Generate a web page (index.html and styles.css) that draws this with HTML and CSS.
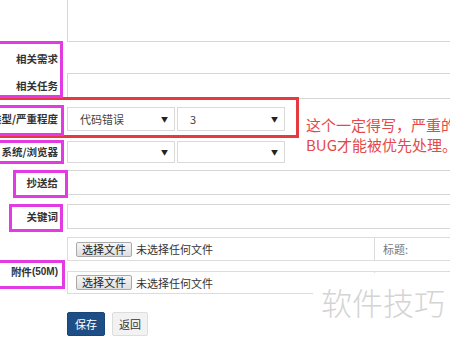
FILE: index.html
```html
<!DOCTYPE html>
<html lang="zh-CN">
<head>
<meta charset="UTF-8">
<title>提Bug</title>
<link rel="stylesheet" href="styles.css">
</head>
<body>

<div class="bug-form">
  <div class="row row-desc">
    <div class="label"></div>
    <div class="field"><textarea class="textarea"></textarea></div>
  </div>

  <div class="row row-story">
    <div class="label">相关需求</div>
    <div class="field"></div>
  </div>

  <div class="row row-task">
    <div class="label">相关任务</div>
    <div class="field"><input type="text" class="input"></div>
  </div>

  <div class="row row-type">
    <div class="label">类型/严重程度</div>
    <div class="field">
      <div class="select">代码错误<span class="caret">▼</span></div>
      <div class="select">3<span class="caret">▼</span></div>
    </div>
  </div>

  <div class="row row-os">
    <div class="label">系统/浏览器</div>
    <div class="field">
      <div class="select"><span class="caret">▼</span></div>
      <div class="select"><span class="caret">▼</span></div>
    </div>
  </div>

  <div class="row row-mail">
    <div class="label">抄送给</div>
    <div class="field"><input type="text" class="input"></div>
  </div>

  <div class="row row-keys">
    <div class="label">关键词</div>
    <div class="field"><input type="text" class="input"></div>
  </div>

  <div class="row row-files">
    <div class="label label-files">附件<span class="size">(50M)</span></div>
    <div class="field field-files">
      <div class="file-box">
        <div class="file-cell"><span class="file-btn">选择文件</span>未选择任何文件</div>
        <div class="title-cell">标题:</div>
      </div>
      <div class="file-box file-box-2">
        <div class="file-cell"><span class="file-btn">选择文件</span>未选择任何文件</div>
        <div class="title-cell"></div>
      </div>
    </div>
  </div>

  <div class="row row-actions">
    <div class="label"></div>
    <div class="field">
      <button class="btn btn-save">保存</button>
      <button class="btn btn-back">返回</button>
    </div>
  </div>
</div>

<!-- annotations drawn on top of the screenshot -->
<div class="mark mark-red"></div>
<div class="mark mark-pink pink-1"></div>
<div class="mark mark-pink pink-2"></div>
<div class="mark mark-pink pink-3"></div>
<div class="mark mark-pink pink-4"></div>
<div class="mark mark-pink pink-5"></div>
<div class="mark mark-pink pink-6"></div>
<div class="note">这个一定得写，严重的<br>BUG才能被优先处理。</div>
<div class="watermark">软件技巧</div>

</body>
</html>
```

FILE: styles.css
```css
* { margin: 0; padding: 0; box-sizing: border-box; }
html, body { width: 450px; height: 339px; overflow: hidden; }
body { font-family: 'Noto Sans CJK SC', 'Liberation Sans', sans-serif; font-size: 11px; color: #333; background: #fff; position: relative; }

.bug-form { margin-top: -10px; width: 560px; }
.row { display: flex; }
.label { width: 67px; flex: none; padding-right: 9px; text-align: right; font-size: 10.5px; font-weight: bold; white-space: nowrap; display: flex; align-items: center; justify-content: flex-end; line-height: 14px; }
.field { flex: 1; display: flex; }

.textarea { display: block; width: 100%; height: 52px; border: 1px solid #d6d6d6; resize: none; }
.input { display: block; width: 100%; border: 1px solid #d6d6d6; font-size: 11px; }

.row-story { height: 31px; }
.row-story .label { padding-top: 3px; }
.row-task .input { height: 26px; }
.row-type { margin-top: 8px; }
.row-type .select { height: 24px; }
.row-os { margin-top: 10px; }
.row-os .select { height: 22px; }
.row-mail { margin-top: 7px; }
.row-mail .input { height: 25px; }
.row-keys { margin-top: 9px; }
.row-keys .input { height: 25px; }
.row-files { margin-top: 8px; }
.row-actions { margin-top: 18px; }

.select { width: 108px; margin-right: 2px; border: 1px solid #d9d9d9; padding-left: 12px; display: flex; align-items: center; position: relative; color: #444; }
.caret { position: absolute; right: 6px; top: 50%; transform: translateY(-50%); font-size: 7px; color: #222; }

.label-files { align-items: flex-start; padding-top: 28px; }
.label-files .size { font-family: 'Liberation Sans', sans-serif; font-size: 10px; }
.field-files { flex-direction: column; }
.file-box { display: flex; height: 24px; border: 1px solid #dcdcdc; }
.file-box-2 { height: 23px; margin-top: 10px; }
.file-cell { width: 307px; border-right: 1px solid #dcdcdc; display: flex; align-items: center; padding-left: 8px; white-space: nowrap; }
.file-btn { height: 15px; line-height: 13px; padding: 0 5px; margin-right: 4px; border: 1px solid #a9a9a9; border-radius: 2px; background: linear-gradient(#f6f6f6, #dedede); color: #222; }
.title-cell { display: flex; align-items: center; padding-left: 8px; color: #777; }

.btn { height: 24px; border: 1px solid #ddd; border-radius: 2px; font-family: inherit; font-size: 11px; }
.btn-save { width: 38px; background: #1d4f86; border-color: #1a4677; color: #fff; }
.btn-back { width: 36px; margin-left: 7px; background: #f2f2f2; color: #333; }

.mark { position: absolute; }
.mark-red { left: -5px; top: 97px; width: 304px; height: 41px; border: 3px solid #e63a3e; }
.mark-pink { border: 3px solid #e23be4; }
.pink-1 { left: -5px; top: 41px; width: 68px; height: 57px; }
.pink-2 { left: -5px; top: 105px; width: 69px; height: 31px; }
.pink-3 { left: -5px; top: 140px; width: 69px; height: 24px; }
.pink-4 { left: 13px; top: 170px; width: 55px; height: 28px; }
.pink-5 { left: 9px; top: 204px; width: 54px; height: 28px; }
.pink-6 { left: -5px; top: 260px; width: 70px; height: 29px; }

.note { position: absolute; left: 306px; top: 115px; font-size: 15px; line-height: 20px; color: #e64848; white-space: nowrap; }
.watermark { position: absolute; left: 313px; top: 273px; right: 0; bottom: 0; background: #fff; padding: 13px 0 0 8px; font-size: 31px; line-height: 31px; font-weight: 300; color: #d4d4d4; white-space: nowrap; }
```
